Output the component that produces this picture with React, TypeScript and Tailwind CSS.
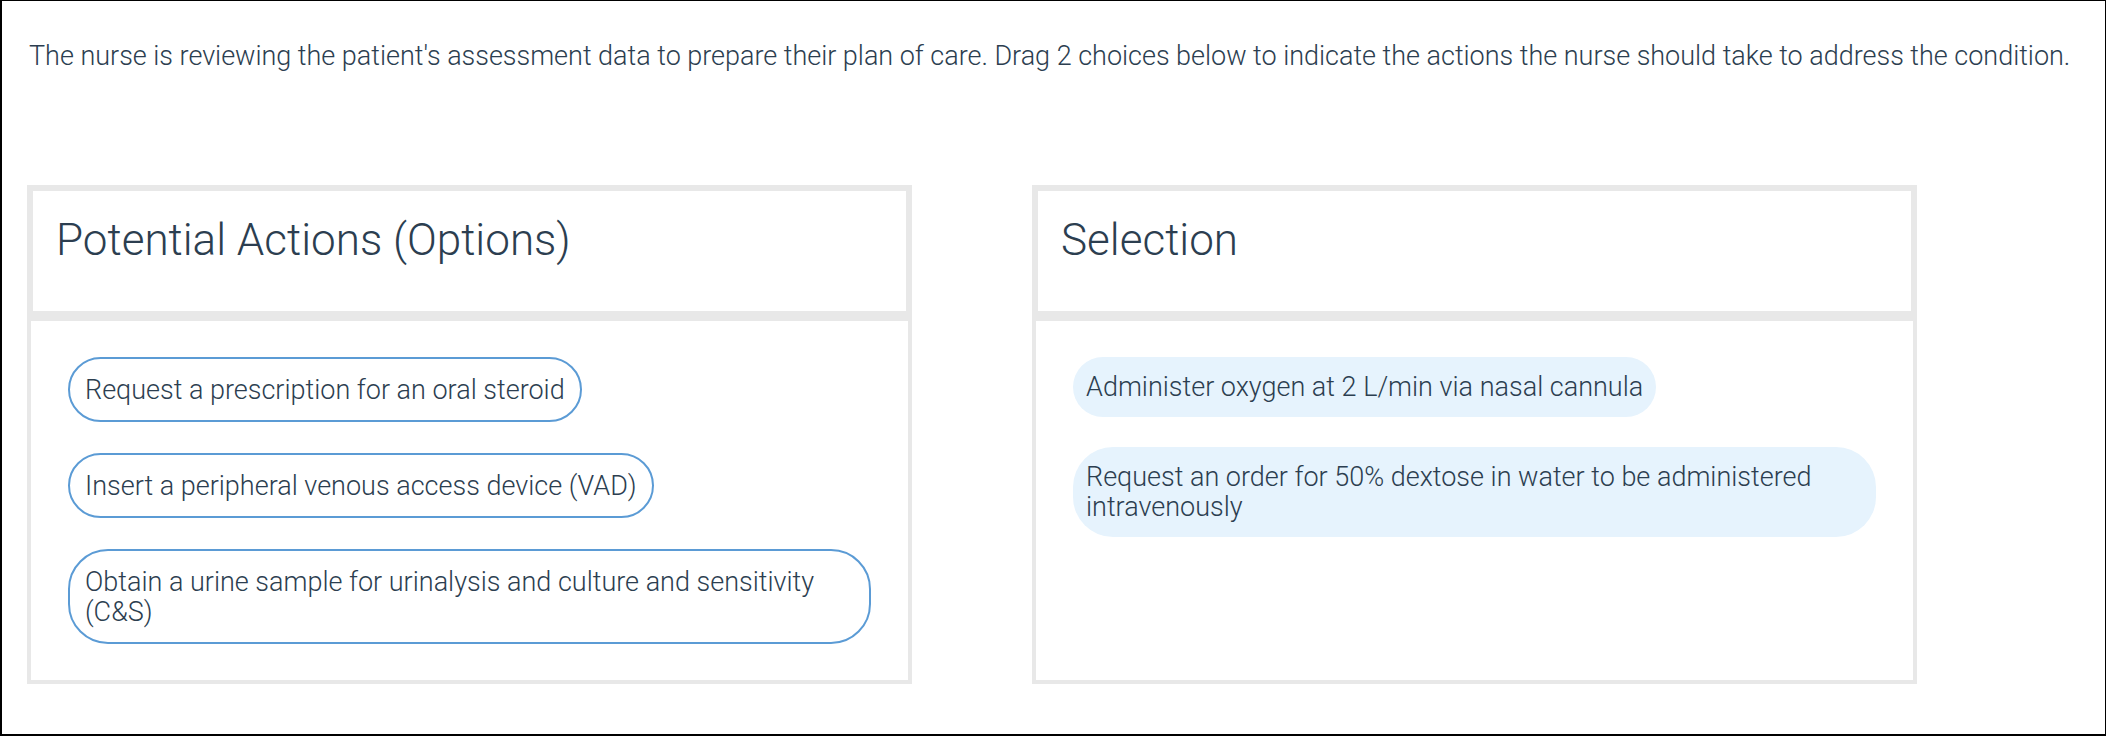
const options = [
  'Request a prescription for an oral steroid',
  'Insert a peripheral venous access device (VAD)',
  'Obtain a urine sample for urinalysis and culture and sensitivity (C&S)',
];

const selected = [
  'Administer oxygen at 2 L/min via nasal cannula',
  'Request an order for 50% dextose in water to be administered intravenously',
];

const Panel = ({ title, children }: { title: string; children: React.ReactNode }) => (
  <div className="w-[885px] flex flex-col">
    <div className="h-[132px] border-[6px] border-[#e8e8e8] pt-[22px] pl-[23px]">
      <h2 className="text-[44px] leading-[54px] font-light text-[#2c3e50]">{title}</h2>
    </div>
    <div className="flex-1 border-4 border-[#e8e8e8] pt-[36px] px-[37px] pb-[36px]">
      <div className="flex flex-col items-start">{children}</div>
    </div>
  </div>
);

export default function App() {
  return (
    <div
      className="w-[2106px] h-[736px] bg-white border-t border-r border-l-2 border-b-2 border-black px-[25px] pt-[39px] text-[#2c3e50]"
      style={{ fontFamily: 'Roboto, "Noto Sans", sans-serif' }}
    >
      <p className="pl-[2px] text-[27px] leading-[32px] font-light tracking-[-0.02px]">
        The nurse is reviewing the patient's assessment data to prepare their plan of care. Drag 2 choices below to indicate the actions the nurse should take to address the condition.
      </p>

      <div className="mt-[113px] flex gap-[120px] items-stretch h-[499px]">
        <Panel title="Potential Actions (Options)">
          <div className="flex flex-col items-start gap-[31px] w-full">
            {options.map((o) => (
              <div
                key={o}
                className="max-w-full border-2 border-[#5b9bd5] rounded-[40px] px-[15px] py-[15.5px] text-[27px] leading-[30px] font-light"
              >
                {o}
              </div>
            ))}
          </div>
        </Panel>

        <Panel title="Selection">
          <div className="flex flex-col items-start gap-[30px] w-full">
            {selected.map((s) => (
              <div
                key={s}
                className="max-w-full bg-[#e6f3fd] rounded-[40px] px-[13px] py-[15px] text-[27px] leading-[30px] font-light"
              >
                {s}
              </div>
            ))}
          </div>
        </Panel>
      </div>
    </div>
  );
}
